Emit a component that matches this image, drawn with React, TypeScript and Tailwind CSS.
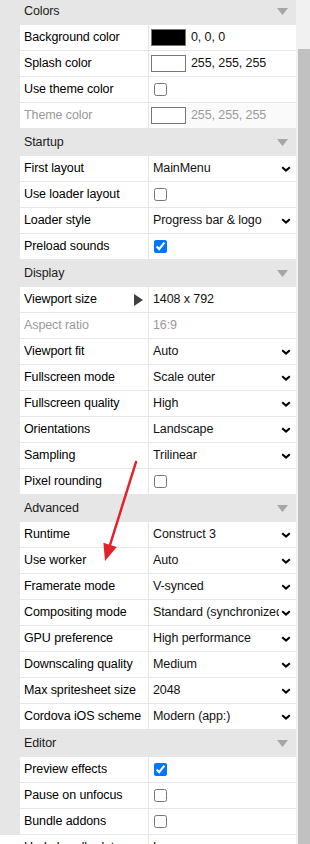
import { ReactNode } from 'react'

type Row =
  | { label: string; kind: 'color'; swatch: string; text: string; disabled?: boolean }
  | { label: string; kind: 'check'; checked: boolean }
  | { label: string; kind: 'select'; value: string }
  | { label: string; kind: 'text'; value: string; disabled?: boolean; expand?: boolean }

type Section = { title: string; rows: Row[] }

const sections: Section[] = [
  {
    title: 'Colors',
    rows: [
      { label: 'Background color', kind: 'color', swatch: '#000000', text: '0, 0, 0' },
      { label: 'Splash color', kind: 'color', swatch: '#ffffff', text: '255, 255, 255' },
      { label: 'Use theme color', kind: 'check', checked: false },
      { label: 'Theme color', kind: 'color', swatch: '#ffffff', text: '255, 255, 255', disabled: true },
    ],
  },
  {
    title: 'Startup',
    rows: [
      { label: 'First layout', kind: 'select', value: 'MainMenu' },
      { label: 'Use loader layout', kind: 'check', checked: false },
      { label: 'Loader style', kind: 'select', value: 'Progress bar & logo' },
      { label: 'Preload sounds', kind: 'check', checked: true },
    ],
  },
  {
    title: 'Display',
    rows: [
      { label: 'Viewport size', kind: 'text', value: '1408 x 792', expand: true },
      { label: 'Aspect ratio', kind: 'text', value: '16:9', disabled: true },
      { label: 'Viewport fit', kind: 'select', value: 'Auto' },
      { label: 'Fullscreen mode', kind: 'select', value: 'Scale outer' },
      { label: 'Fullscreen quality', kind: 'select', value: 'High' },
      { label: 'Orientations', kind: 'select', value: 'Landscape' },
      { label: 'Sampling', kind: 'select', value: 'Trilinear' },
      { label: 'Pixel rounding', kind: 'check', checked: false },
    ],
  },
  {
    title: 'Advanced',
    rows: [
      { label: 'Runtime', kind: 'select', value: 'Construct 3' },
      { label: 'Use worker', kind: 'select', value: 'Auto' },
      { label: 'Framerate mode', kind: 'select', value: 'V-synced' },
      { label: 'Compositing mode', kind: 'select', value: 'Standard (synchronized)' },
      { label: 'GPU preference', kind: 'select', value: 'High performance' },
      { label: 'Downscaling quality', kind: 'select', value: 'Medium' },
      { label: 'Max spritesheet size', kind: 'select', value: '2048' },
      { label: 'Cordova iOS scheme', kind: 'select', value: 'Modern (app:)' },
    ],
  },
  {
    title: 'Editor',
    rows: [
      { label: 'Preview effects', kind: 'check', checked: true },
      { label: 'Pause on unfocus', kind: 'check', checked: false },
      { label: 'Bundle addons', kind: 'check', checked: false },
    ],
  },
]

function Chevron() {
  return (
    <svg width="10" height="6" viewBox="0 0 10 6" className="shrink-0">
      <path d="M1.2 1.2 L5 4.6 L8.8 1.2" fill="none" stroke="#000" strokeWidth="2" />
    </svg>
  )
}

function Value({ row }: { row: Row }) {
  if (row.kind === 'color') {
    return (
      <div className="flex items-center h-full">
        <span
          className="ml-[2px] w-[35px] h-[17px] border border-[#767676] shrink-0"
          style={{ background: row.swatch }}
        />
        <span
          className={`flex-1 h-full flex items-center pl-[5px] ${
            row.disabled ? 'text-[#9a9a9a] bg-[#fafafa]' : 'text-[#111]'
          }`}
        >
          {row.text}
        </span>
      </div>
    )
  }
  if (row.kind === 'check') {
    return (
      <div className="flex items-center h-full">
        <input type="checkbox" defaultChecked={row.checked} className="m-0 ml-[5px] w-[13px] h-[13px]" />
      </div>
    )
  }
  if (row.kind === 'select') {
    return (
      <div className="flex items-center h-full pl-[4px] pr-[5px] gap-[2px]">
        <span className="flex-1 overflow-hidden whitespace-nowrap text-[#111]">{row.value}</span>
        <Chevron />
      </div>
    )
  }
  return (
    <div className={`flex items-center h-full pl-[4px] ${row.disabled ? 'text-[#9a9a9a]' : 'text-[#111]'}`}>
      {row.value}
    </div>
  )
}

function PropRow({ row }: { row: Row }) {
  const dim = (row.kind === 'color' || row.kind === 'text') && row.disabled
  return (
    <div className="flex h-[26px] pb-px">
      <div className="w-[20px] shrink-0" />
      <div
        className={`w-[128px] shrink-0 bg-white flex items-center pl-[4px] pr-[5px] ${
          dim ? 'text-[#9a9a9a]' : 'text-black'
        }`}
      >
        <span className="flex-1 whitespace-nowrap overflow-hidden">{row.label}</span>
        {row.kind === 'text' && row.expand && (
          <svg width="9" height="12" viewBox="0 0 9 12" className="shrink-0">
            <path d="M0 0 L9 6 L0 12 Z" fill="#404040" />
          </svg>
        )}
      </div>
      <div className="w-px shrink-0" />
      <div className="flex-1 bg-white min-w-0">
        <Value row={row} />
      </div>
    </div>
  )
}

function Header({ title, first }: { title: string; first?: boolean }) {
  return (
    <div className={`flex items-center h-[27px] pl-[24px] pr-[8px] text-[#1a1a1a] ${first ? '-mt-[2px]' : ''}`}>
      <span className="flex-1">{title}</span>
      <svg width="11" height="7" viewBox="0 0 11 7">
        <path d="M0 0 L11 0 L5.5 7 Z" fill="#a6a6a6" />
      </svg>
    </div>
  )
}

function Panel({ children }: { children: ReactNode }) {
  return <div className="flex-1 bg-[#e6e6e6] overflow-hidden">{children}</div>
}

export default function App() {
  return (
    <div
      className="relative w-[310px] h-[844px] overflow-hidden flex text-[12.5px] tracking-[-0.1px] leading-none"
      style={{ fontFamily: '"Liberation Sans", Arial, sans-serif' }}
    >
      <Panel>
        {sections.map((s, i) => (
          <div key={s.title}>
            <Header title={s.title} first={i === 0} />
            {s.rows.map((r) => (
              <PropRow key={r.label} row={r} />
            ))}
          </div>
        ))}
        <div className="flex h-[26px] bg-white">
          <div className="w-[148px] shrink-0 pl-[24px] pt-[6px] text-black">Undo bundle data</div>
          <div className="w-px bg-[#e6e6e6]" />
          <div className="flex-1 pl-[4px] pt-[6px] text-[#111]">Lazy</div>
        </div>
      </Panel>
      <div className="w-[14px] shrink-0 bg-[#f1f1f1] flex flex-col">
        <div className="h-[49px]" />
        <div className="flex-1 ml-[2px] bg-[#c1c1c1]" />
      </div>
      <svg className="absolute inset-0 pointer-events-none" width="310" height="844">
        <line x1="136" y1="462" x2="110" y2="545" stroke="#e3212b" strokeWidth="2.5" strokeLinecap="round" />
        <polygon points="105,561 103.4,542.7 116.8,546.9" fill="#e3212b" />
      </svg>
    </div>
  )
}
